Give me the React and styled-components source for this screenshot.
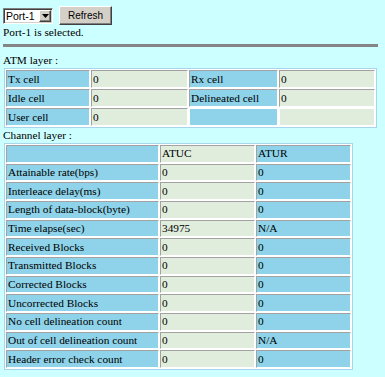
import React from "react";
import styled, { createGlobalStyle } from "styled-components";

const GlobalStyle = createGlobalStyle`
  html, body {
    margin: 0;
    padding: 0;
    background: #ccffff;
  }
  body {
    font-family: "Liberation Serif", "Times New Roman", serif;
    font-size: 11.3px;
    color: #000;
  }
`;

const Page = styled.div`
  padding: 6px 0 6px 3px;
  font-family: "Liberation Serif", "Times New Roman", serif;
  font-size: 11.3px;
`;

const Toolbar = styled.div`
  display: flex;
  align-items: flex-start;
  gap: 6px;
  height: 19px;
`;

const SelectBox = styled.div`
  box-sizing: border-box;
  display: flex;
  align-items: center;
  justify-content: space-between;
  width: 50px;
  height: 16px;
  margin-top: 2px;
  padding: 0 1px 0 2px;
  background: #fff;
  border: 1px solid;
  border-color: #808080 #fff #fff #808080;
  box-shadow: inset 1px 1px 0 #404040, inset -1px -1px 0 #d4d0c8;
  font-family: "Liberation Sans", Arial, sans-serif;
  font-size: 10.5px;
`;

const SelectArrow = styled.span`
  box-sizing: border-box;
  display: flex;
  align-items: center;
  justify-content: center;
  width: 12px;
  height: 12px;
  background: #d4d0c8;
  border: 1px solid;
  border-color: #fff #404040 #404040 #fff;
  box-shadow: inset -1px -1px 0 #808080;
`;

const RefreshButton = styled.button`
  box-sizing: border-box;
  width: 53px;
  height: 19px;
  padding: 0;
  background: #d4d0c8;
  border: 1px solid;
  border-color: #fff #404040 #404040 #fff;
  box-shadow: inset -1px -1px 0 #808080;
  font-family: "Liberation Sans", Arial, sans-serif;
  font-size: 10px;
  color: #000;
`;

const Status = styled.div`
  line-height: 15px;
`;

const Rule = styled.hr`
  width: 375px;
  height: 3px;
  margin: 4px 0 6px;
  border: none;
  background: #858585;
`;

const Caption = styled.div`
  line-height: 15px;
`;

const Grid = styled.table`
  width: ${(p) => p.$w}px;
  margin-left: 1px;
  table-layout: fixed;
  border-collapse: separate;
  border-spacing: 1px;
  border: 1px solid #a6d6ec;
  background: #fff;
  font-family: "Liberation Serif", "Times New Roman", serif;
  font-size: 11.3px;
  font-weight: normal;
  color: #000;
`;

const Row = styled.tr`
  height: ${(p) => p.$h}px;
`;

const Cell = styled.td`
  box-sizing: border-box;
  width: ${(p) => p.$w}px;
  padding: 0 1px;
  border: 1px solid;
  border-color: ${(p) => (p.$bare ? "#fff" : "#a2a2a2 #fff #fff #a2a2a2")};
  background: ${(p) => (p.$tone === "label" ? "#8ed3e9" : "#e0ecdc")};
  font-family: "Liberation Serif", "Times New Roman", serif;
  font-size: 11.3px;
  font-weight: normal;
  line-height: 13px;
  vertical-align: middle;
  white-space: nowrap;
  overflow: hidden;
`;

const atmWidths = [84, 97, 89, 96];
const atmTones = ["label", "value", "label", "value"];
const atmRows = [
  ["Tx cell", "0", "Rx cell", "0"],
  ["Idle cell", "0", "Delineated cell", "0"],
  ["User cell", "0", null, null],
];

const chWidths = [153, 95, 95];
const chTones = ["label", "value", "label"];
const chRows = [
  ["", "ATUC", "ATUR"],
  ["Attainable rate(bps)", "0", "0"],
  ["Interleace delay(ms)", "0", "0"],
  ["Length of data-block(byte)", "0", "0"],
  ["Time elapse(sec)", "34975", "N/A"],
  ["Received Blocks", "0", "0"],
  ["Transmitted Blocks", "0", "0"],
  ["Corrected Blocks", "0", "0"],
  ["Uncorrected Blocks", "0", "0"],
  ["No cell delineation count", "0", "0"],
  ["Out of cell delineation count", "0", "N/A"],
  ["Header error check count", "0", "0"],
];

const DataTable = ({ rows, widths, tones, rowHeight }) => {
  const total = widths.reduce((a, b) => a + b, 0) + widths.length + 1 + 2;
  return (
    <Grid $w={total}>
      <tbody>
        {rows.map((row, i) => (
          <Row key={i} $h={rowHeight}>
            {row.map((text, j) => (
              <Cell key={j} $w={widths[j]} $tone={tones[j]} $bare={text === null}>
                {text || "\u00a0"}
              </Cell>
            ))}
          </Row>
        ))}
      </tbody>
    </Grid>
  );
};

const App = () => {
  return (
    <>
      <GlobalStyle />
      <Page>
        <Toolbar>
          <SelectBox>
            <span>Port-1</span>
            <SelectArrow>
              <svg width="7" height="4" viewBox="0 0 7 4">
                <polygon points="0,0 7,0 3.5,4" fill="#000" />
              </svg>
            </SelectArrow>
          </SelectBox>
          <RefreshButton>Refresh</RefreshButton>
        </Toolbar>
        <Status>Port-1 is selected.</Status>
        <Rule />
        <Caption>ATM layer :</Caption>
        <DataTable rows={atmRows} widths={atmWidths} tones={atmTones} rowHeight={18} />
        <Caption>Channel layer :</Caption>
        <DataTable rows={chRows} widths={chWidths} tones={chTones} rowHeight={17.67} />
      </Page>
    </>
  );
};

export default App;
